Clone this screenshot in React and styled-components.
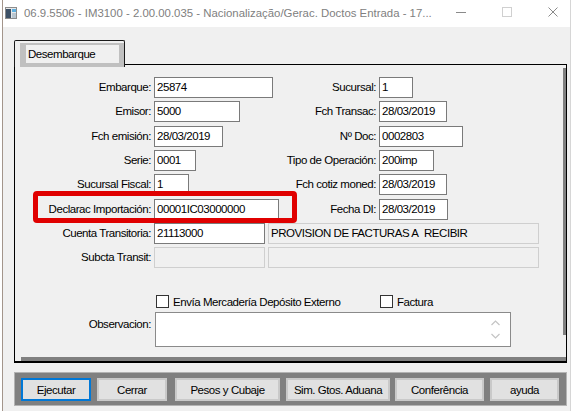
import React from "react";
import styled, { createGlobalStyle } from "styled-components";

const UI = `"Liberation Sans", Arial, sans-serif`;

const Global = createGlobalStyle`
  html, body { margin: 0; padding: 0; background: #ffffff; }
  body { font-family: ${UI}; font-size: 11.5px; letter-spacing: -0.45px; color: #000; }
  * { box-sizing: border-box; }
`;

const Window = styled.div`
  margin-left: 2px;
  width: 569px;
  height: 411px;
  background: #f0f0f0;
  border-left: 1px solid #a3958b;
  border-right: 1px solid #d6d6d6;
  display: flex;
  flex-direction: column;
  overflow: hidden;
`;

const TitleBar = styled.div`
  height: 27px;
  flex: none;
  background: #ffffff;
  display: flex;
  align-items: center;
  padding-left: 2px;
`;

const AppIcon = styled.svg`
  width: 12px;
  height: 12px;
  flex: none;
  margin-top: -1px;
`;

const Title = styled.div`
  margin-left: 7px;
  flex: 1;
  font-family: "Liberation Sans", Arial, sans-serif;
  font-size: 11.4px;
  letter-spacing: 0;
  color: #808080;
  white-space: nowrap;
  overflow: hidden;
  margin-top: -2px;
`;

const Control = styled.div`
  width: ${(p) => p.$w}px;
  height: 27px;
  flex: none;
  display: flex;
  align-items: center;
  justify-content: ${(p) => (p.$start ? "flex-start" : "center")};
  padding-left: ${(p) => p.$pl || 0}px;
  margin-top: -3px;
`;

const Body = styled.div`
  flex: 1;
  display: flex;
  flex-direction: column;
  padding: 13px 3px 0 11px;
`;

const TabStrip = styled.div`
  display: flex;
  position: relative;
  z-index: 1;
  margin-bottom: -3px;
`;

const Tab = styled.div`
  width: 111px;
  height: 27px;
  background: #f0f0f0;
  border: 1px solid #1a1a1a;
  border-bottom: none;
  border-radius: 2px 2px 0 0;
  padding: 2px 0 0 5px;
  display: flex;
`;

const TabFace = styled.div`
  flex: 1;
  background: #c0c0c0;
  padding: 2px 5px 4px 6px;
  display: flex;
`;

const TabLabel = styled.div`
  flex: 1;
  background: #f0f0f0;
  padding-left: 2px;
  line-height: 18px;
`;

const Panel = styled.div`
  position: relative;
  height: 299px;
  border: 1px solid #000;
  border-bottom-width: 2px;
  padding-top: 12px;
  &::after {
    content: "";
    position: absolute;
    right: 0;
    top: 3px;
    width: 3px;
    height: 267px;
    background: #808080;
  }
  &::before {
    content: "";
    position: absolute;
    left: 6px;
    right: 0;
    bottom: 0;
    height: 4px;
    background: #808080;
  }
`;

const FormGrid = styled.div`
  display: grid;
  grid-template-columns: 136px 127px 92px 1fr;
  column-gap: 3px;
  row-gap: 3.35px;
  grid-auto-rows: 21px;
`;

const Label = styled.div`
  text-align: right;
  line-height: 21px;
  white-space: nowrap;
`;

const Field = styled.div`
  width: ${(p) => p.$w}px;
  height: 21px;
  flex: none;
  border: 1px solid ${(p) => (p.$disabled ? "#cfcfcf" : "#7a7a7a")};
  background: ${(p) => (p.$disabled ? "#f0f0f0" : "#ffffff")};
  padding: 0 2px;
  line-height: 19px;
  white-space: nowrap;
  overflow: hidden;
`;

const Cell = styled.div`
  display: flex;
  gap: 3px;
  ${(p) => p.$span && `grid-column: ${p.$span};`}
`;

const Highlight = styled.div`
  position: absolute;
  left: 18px;
  top: 126px;
  width: 264px;
  height: 32px;
  border: 5.5px solid #e00000;
  border-radius: 4px;
  pointer-events: none;
`;

const CheckRow = styled.div`
  display: grid;
  grid-template-columns: 136px 127px 92px 1fr;
  column-gap: 3px;
  margin-top: 27px;
  height: 13px;
`;

const Check = styled.label`
  display: flex;
  align-items: center;
  white-space: nowrap;
  margin-left: ${(p) => p.$ml || 0}px;
  ${(p) => p.$col && `grid-column: ${p.$col};`}
`;

const Box = styled.span`
  width: 13px;
  height: 13px;
  flex: none;
  border: 1px solid #333;
  background: #fff;
  margin-right: 4px;
`;

const ObsRow = styled.div`
  display: grid;
  grid-template-columns: 136px 1fr;
  column-gap: 3px;
  margin-top: 4px;
`;

const ObsLabel = styled.div`
  text-align: right;
  padding-top: 5px;
  line-height: 14px;
`;

const TextArea = styled.div`
  margin-left: 1px;
  width: 356px;
  height: 35px;
  border: 1px solid #8a8a8a;
  background: #fff;
  display: flex;
  justify-content: flex-end;
`;

const ScrollCol = styled.div`
  width: 17px;
  margin-right: 6px;
  display: flex;
  flex-direction: column;
  align-items: center;
  justify-content: center;
  gap: 7px;
`;

const ButtonBar = styled.div`
  margin-top: 9px;
  height: 34px;
  border: 1px solid #b3b3b3;
  background: #808080;
  padding: 5px 6px 4px 6px;
  display: flex;
`;

const Button = styled.div`
  width: ${(p) => p.$w}px;
  height: 23px;
  margin-left: ${(p) => p.$ml}px;
  flex: none;
  background: #e1e1e1;
  border: 2px solid ${(p) => (p.$focus ? "#0078d7" : "#c9c9c9")};
  display: flex;
  align-items: center;
  justify-content: center;
  white-space: nowrap;
`;

const left = [
  { l: "Embarque:", v: "25874", w: 119 },
  { l: "Emisor:", v: "5000", w: 86 },
  { l: "Fch emisión:", v: "28/03/2019", w: 69 },
  { l: "Serie:", v: "0001", w: 42 },
  { l: "Sucursal Fiscal:", v: "1", w: 35 },
  { l: "Declarac Importación:", v: "00001IC03000000", w: 125 },
];
const right = [
  { l: "Sucursal:", v: "1", w: 34 },
  { l: "Fch Transac:", v: "28/03/2019", w: 68 },
  { l: "Nº Doc:", v: "0002803", w: 84 },
  { l: "Tipo de Operación:", v: "200imp", w: 55 },
  { l: "Fch cotiz moned:", v: "28/03/2019", w: 68 },
  { l: "Fecha DI:", v: "28/03/2019", w: 69 },
];

const buttons = [
  { t: "Ejecutar", w: 70, ml: 0, focus: true },
  { t: "Cerrar", w: 70, ml: 6 },
  { t: "Pesos y Cubaje", w: 105, ml: 8 },
  { t: "Sim. Gtos. Aduana", w: 104, ml: 6 },
  { t: "Conferência", w: 89, ml: 5 },
  { t: "ayuda", w: 69, ml: 6 },
];

export default function App() {
  return (
    <>
      <Global />
      <Window>
        <TitleBar>
          <AppIcon viewBox="0 0 12 12">
            <rect x="0.5" y="0.5" width="11" height="11" fill="#e8e8e8" stroke="#8c8c8c" />
            <rect x="1" y="2" width="5" height="9" fill="#3d5166" />
            <rect x="7" y="2" width="4" height="3" fill="#5fb0e0" />
            <rect x="7" y="6" width="4" height="5" fill="#b9c6d0" />
          </AppIcon>
          <Title>06.9.5506 - IM3100 - 2.00.00.035 - Nacionalização/Gerac. Doctos Entrada - 17...</Title>
          <Control $w={46}>
            <svg width="10" height="10" viewBox="0 0 10 10">
              <line x1="0" y1="5.5" x2="10" y2="5.5" stroke="#8a8a8a" strokeWidth="1" />
            </svg>
          </Control>
          <Control $w={46}>
            <svg width="10" height="10" viewBox="0 0 10 10">
              <rect x="0.5" y="0.5" width="9" height="9" fill="none" stroke="#d0d0d0" strokeWidth="1" />
            </svg>
          </Control>
          <Control $w={40} $start $pl={18}>
            <svg width="10" height="10" viewBox="0 0 10 10">
              <path d="M0.5 0.5 L9.5 9.5 M9.5 0.5 L0.5 9.5" stroke="#8a8a8a" strokeWidth="1" />
            </svg>
          </Control>
        </TitleBar>
        <Body>
          <TabStrip>
            <Tab>
              <TabFace>
                <TabLabel>Desembarque</TabLabel>
              </TabFace>
            </Tab>
          </TabStrip>
          <Panel>
            <FormGrid>
              {left.map((r, i) => (
                <React.Fragment key={r.l}>
                  <Label>{r.l}</Label>
                  <Cell>
                    <Field $w={r.w}>{r.v}</Field>
                  </Cell>
                  <Label>{right[i].l}</Label>
                  <Cell>
                    <Field $w={right[i].w}>{right[i].v}</Field>
                  </Cell>
                </React.Fragment>
              ))}
              <Label>Cuenta Transitoria:</Label>
              <Cell $span="2 / 5">
                <Field $w={111}>21113000</Field>
                <Field $w={271} $disabled>PROVISION DE FACTURAS A&nbsp; RECIBIR</Field>
              </Cell>
              <Label>Subcta Transit:</Label>
              <Cell $span="2 / 5">
                <Field $w={111} $disabled />
                <Field $w={271} $disabled />
              </Cell>
            </FormGrid>
            <CheckRow>
              <Check $col="2" $ml={2}>
                <Box />
                Envía Mercadería Depósito Externo
              </Check>
              <Check $col="4" $ml={1}>
                <Box />
                Factura
              </Check>
            </CheckRow>
            <ObsRow>
              <ObsLabel>Observacion:</ObsLabel>
              <TextArea>
                <ScrollCol>
                  <svg width="9" height="6" viewBox="0 0 9 6">
                    <path d="M0.5 5 L4.5 1 L8.5 5" fill="none" stroke="#c4c4c4" strokeWidth="1.2" />
                  </svg>
                  <svg width="9" height="6" viewBox="0 0 9 6">
                    <path d="M0.5 1 L4.5 5 L8.5 1" fill="none" stroke="#c4c4c4" strokeWidth="1.2" />
                  </svg>
                </ScrollCol>
              </TextArea>
            </ObsRow>
            <Highlight />
          </Panel>
          <ButtonBar>
            {buttons.map((b) => (
              <Button key={b.t} $w={b.w} $ml={b.ml} $focus={b.focus}>
                {b.t}
              </Button>
            ))}
          </ButtonBar>
        </Body>
      </Window>
    </>
  );
}
